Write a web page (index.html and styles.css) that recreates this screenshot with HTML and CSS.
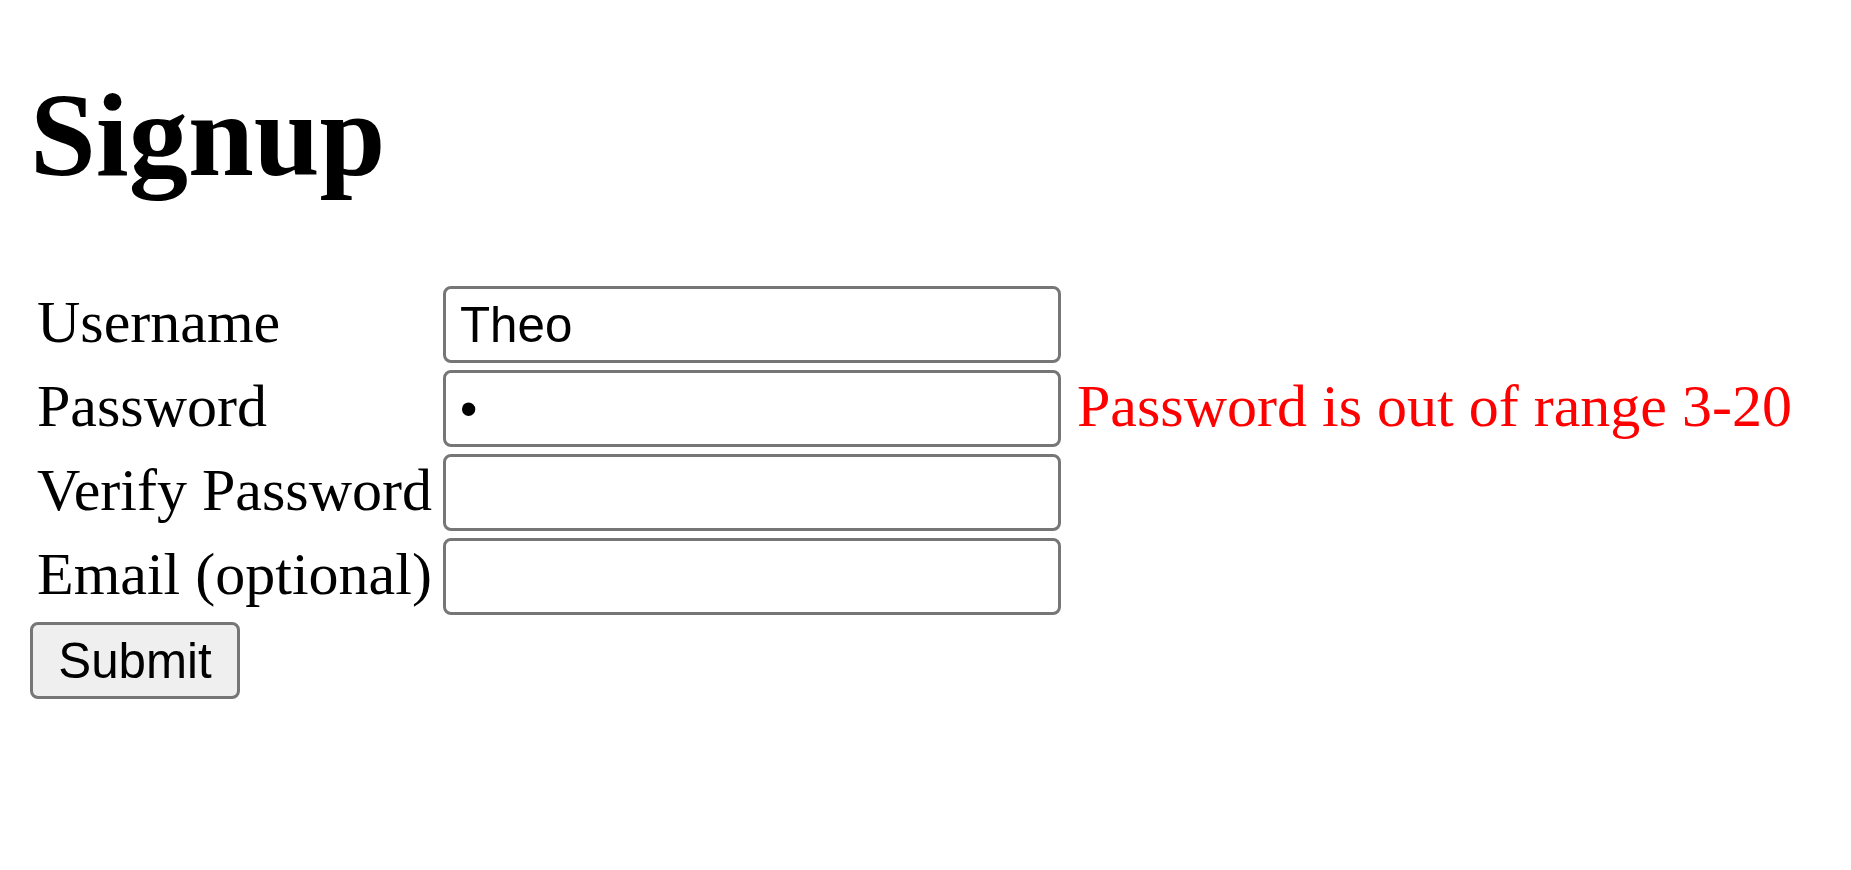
FILE: index.html
```html
<!DOCTYPE html>
<html lang="en">
<head>
<meta charset="utf-8">
<title>Signup</title>
<link rel="stylesheet" href="styles.css">
</head>
<body class="page">
  <h1 class="title">Signup</h1>
  <form class="signup" onsubmit="return false">
    <div class="rows">
      <label class="label" for="username">Username</label>
      <input class="field" id="username" type="text" value="Theo">
      <span class="error"></span>

      <label class="label" for="password">Password</label>
      <input class="field" id="password" type="password" value="a">
      <span class="error">Password is out of range 3-20</span>

      <label class="label" for="verify">Verify Password</label>
      <input class="field" id="verify" type="password" value="">
      <span class="error"></span>

      <label class="label" for="email">Email (optional)</label>
      <input class="field" id="email" type="text" value="">
      <span class="error"></span>
    </div>
    <button class="submit" type="submit">Submit</button>
  </form>
</body>
</html>
```

FILE: styles.css
```css
html, body {
  background: #ffffff;
}

.page {
  margin: 0;
  padding: 0 30px;
  font-family: "Liberation Serif", "Times New Roman", serif;
  font-size: 60px;
  color: #000000;
}

.title {
  font-size: 118.4px;
  font-weight: bold;
  margin: 0;
  padding: 67px 0 83px 0;
  line-height: 1.15;
}

.signup {
  display: flex;
  flex-direction: column;
  align-items: flex-start;
}

.rows {
  display: grid;
  grid-template-columns: 406px 618px max-content;
  row-gap: 7px;
  align-items: baseline;
  margin-left: 7px;
}

.label {
  white-space: nowrap;
}

.field {
  box-sizing: border-box;
  width: 618px;
  height: 77px;
  margin: 0;
  padding: 0 14px;
  border: 3.7px solid #767676;
  border-radius: 8px;
  background: #ffffff;
  font-family: "Liberation Sans", Arial, sans-serif;
  font-size: 49.3px;
  color: #000000;
  outline: none;
}

.error {
  color: #ff0000;
  margin-left: 16px;
  white-space: nowrap;
}

.submit {
  box-sizing: border-box;
  margin-top: 7px;
  height: 77px;
  width: 210px;
  padding: 0 22px;
  border: 3.7px solid #767676;
  border-radius: 8px;
  background: #efefef;
  font-family: "Liberation Sans", Arial, sans-serif;
  font-size: 49.3px;
  color: #000000;
}
```
